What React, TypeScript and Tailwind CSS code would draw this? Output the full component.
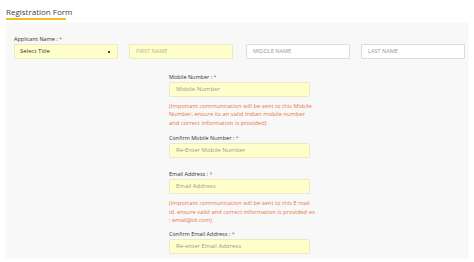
import React from 'react';

const FONT = { fontFamily: '"Open Sans", "Noto Sans", Arial, sans-serif' };

function Label({ text }: { text: string }) {
  return (
    <div className="text-[5.5px] leading-[8px] text-[#333]">
      {text} <span className="text-[#e0603a]">*</span>
    </div>
  );
}

function YellowInput({ placeholder }: { placeholder: string }) {
  return (
    <div className="h-[15px] w-[141px] mt-[1px] border border-[#ecebc0] bg-[#ffffcc] rounded-[1px] flex items-center px-[6px] text-[6px] text-[#9a9a8a]">
      {placeholder}
    </div>
  );
}

function Help({ lines }: { lines: string[] }) {
  return (
    <div className="mt-[5px] text-[5.8px] leading-[8.4px] text-[#e8763e]">
      {lines.map((l) => (
        <div key={l} className="whitespace-nowrap">{l}</div>
      ))}
    </div>
  );
}

export default function App() {
  return (
    <div className="w-[474px] h-[262px] bg-white overflow-hidden" style={FONT}>
      {/* header */}
      <div className="pl-[6px] pt-[6px] h-[23px]">
        <div className="text-[8px] leading-[12px] text-[#444] w-fit">Registration Form</div>
        <div className="h-[2px] w-[60px] bg-[#f2bd1d]" />
      </div>

      {/* panel */}
      <div className="mx-[6px] h-[235px] bg-[#f8f8f8] shadow-[0_0_1px_rgba(0,0,0,0.08)]">
        <div className="pt-[12px] pl-[8px]">
          <Label text="Applicant Name :" />
          <div className="flex mt-[1px]">
            <div className="h-[15px] w-[104px] border border-[#ecebc0] bg-[#ffffcc] rounded-[1px] flex items-center justify-between px-[5px] text-[6px] text-[#333]">
              <span>Select Title</span>
              <span className="w-[2px] h-[2px] bg-[#444] mr-[2px]" />
            </div>
            <div className="ml-[11px] h-[15px] w-[104px] border border-[#ecebc0] bg-[#ffffcc] rounded-[1px] flex items-center px-[6px] text-[5.6px] text-[#b5b49a]">
              FIRST NAME
            </div>
            <div className="ml-[13px] h-[15px] w-[104px] border border-[#dcdcdc] bg-white rounded-[1px] flex items-center px-[6px] text-[5.6px] text-[#999]">
              MIDDLE NAME
            </div>
            <div className="ml-[11px] h-[15px] w-[104px] border border-[#dcdcdc] bg-white rounded-[1px] flex items-center px-[6px] text-[5.6px] text-[#999]">
              LAST NAME
            </div>
          </div>
        </div>

        <div className="pl-[163px] pt-[14px]">
          <Label text="Mobile Number :" />
          <YellowInput placeholder="Mobile Number" />
          <Help
            lines={[
              '(Important communication will be sent to this Mobile',
              'Number, ensure its an valid Indian mobile number',
              'and correct information is provided)',
            ]}
          />
          <div className="mt-[7px]">
            <Label text="Confirm Mobile Number :" />
            <YellowInput placeholder="Re-Enter Mobile Number" />
          </div>
          <div className="mt-[12px]">
            <Label text="Email Address :" />
            <YellowInput placeholder="Email Address" />
          </div>
          <Help
            lines={[
              '(Important communication will be sent to this E mail',
              'id. ensure valid and correct information is provided ex',
              ': email@id.com)',
            ]}
          />
          <div className="mt-[6px]">
            <Label text="Confirm Email Address :" />
            <YellowInput placeholder="Re-enter Email Address" />
          </div>
        </div>
      </div>
    </div>
  );
}
